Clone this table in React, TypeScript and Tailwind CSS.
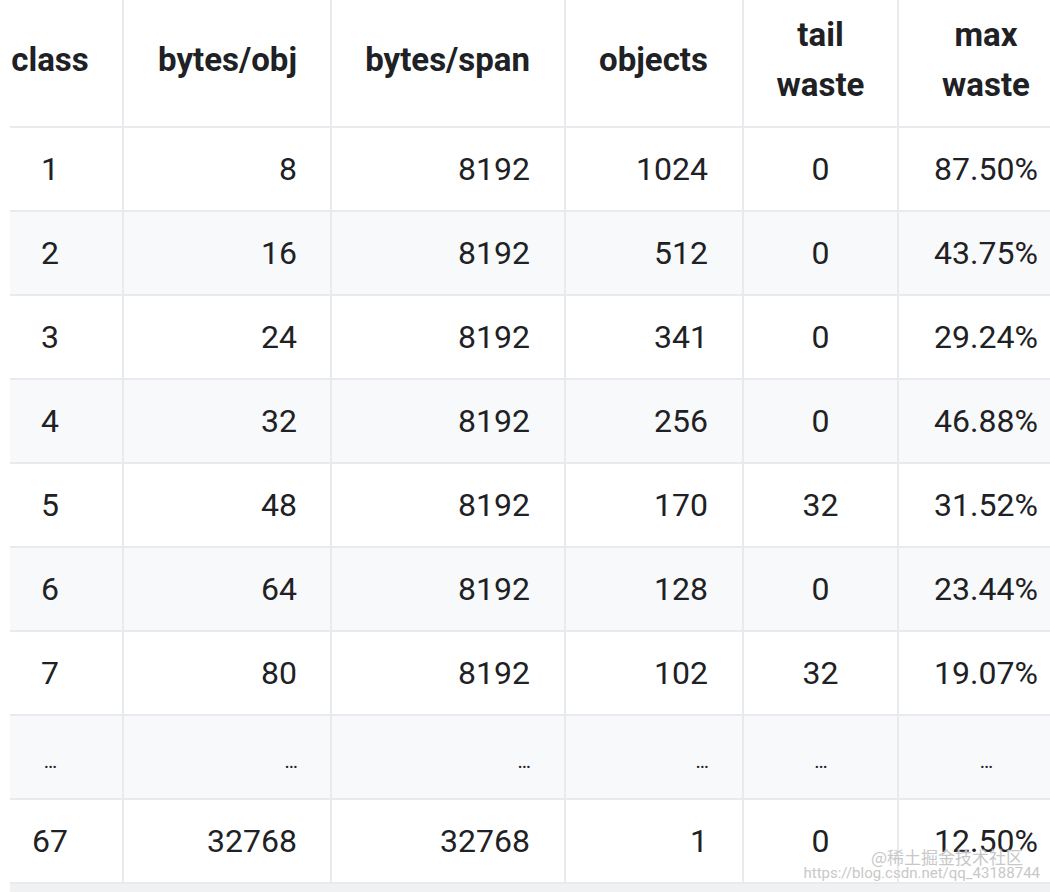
import React from "react";

const rows: string[][] = [
  ["1", "8", "8192", "1024", "0", "87.50%"],
  ["2", "16", "8192", "512", "0", "43.75%"],
  ["3", "24", "8192", "341", "0", "29.24%"],
  ["4", "32", "8192", "256", "0", "46.88%"],
  ["5", "48", "8192", "170", "32", "31.52%"],
  ["6", "64", "8192", "128", "0", "23.44%"],
  ["7", "80", "8192", "102", "32", "19.07%"],
  ["…", "…", "…", "…", "…", "…"],
  ["67", "32768", "32768", "1", "0", "12.50%"],
];

// per-column alignment + padding
const cellCls = [
  "justify-center pl-[2px] pr-[34px] border-r-2",
  "justify-end pr-[33px] border-r-2",
  "justify-end pr-[34px] border-r-2",
  "justify-end pr-[34px] border-r-2",
  "justify-center border-r-2",
  "justify-center",
];

const headers: React.ReactNode[] = [
  "class",
  "bytes/obj",
  "bytes/span",
  "objects",
  <>
    tail
    <br />
    waste
  </>,
  <>
    max
    <br />
    waste
  </>,
];

const App: React.FC = () => {
  return (
    <div
      className="relative w-[1050px] h-[892px] overflow-hidden bg-white text-[#202124]"
      style={{ fontFamily: "Roboto, 'Noto Sans', sans-serif" }}
    >
      <div className="ml-[10px] w-[1063px] grid grid-cols-[114px_208px_234px_178px_155px_174px]">
        {headers.map((h, i) => (
          <div
            key={"h" + i}
            className={`h-[128px] pb-[6px] flex items-center border-b-2 border-[#e8eaed] text-[33px] font-bold leading-[50px] text-center ${cellCls[i]}`}
          >
            <span>{h}</span>
          </div>
        ))}
        {rows.map((r, ri) =>
          r.map((v, ci) => (
            <div
              key={ri + "-" + ci}
              className={`h-[84px] flex items-center border-b-2 border-[#e8eaed] text-[32px] leading-none ${
                ri % 2 === 1 ? "bg-[#f8f9fa]" : "bg-white"
              } ${cellCls[ci]}`}
            >
              {v === "…" ? <span className="mt-[8px] text-[20px] tracking-[-1px]">…</span> : v}
            </div>
          ))
        )}
      </div>
      <div className="ml-[10px] h-[10px] bg-[#f0f1f3]" />

      {/* watermark */}
      <div className="absolute right-[10px] bottom-[10px] flex flex-col items-end text-[#c8c8c8] [text-shadow:0_0_2px_#fff]">
        <span
          className="text-[17px] leading-[17px] mr-[17px]"
          style={{ fontFamily: "'Noto Sans CJK SC', sans-serif" }}
        >
          @稀土掘金技术社区
        </span>
        <span className="text-[15px] leading-[17px]">https://blog.csdn.net/qq_43188744</span>
      </div>
    </div>
  );
};

export default App;
